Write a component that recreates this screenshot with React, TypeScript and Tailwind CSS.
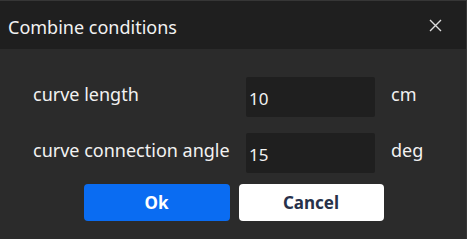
const rows = [
  { label: "curve length", value: "10", unit: "cm" },
  { label: "curve connection angle", value: "15", unit: "deg" },
];

export default function App() {
  return (
    <div
      className="w-[467px] h-[239px] flex flex-col bg-[#2b2b2b] border-t border-r border-[#363636] text-[#f2f2f2] overflow-hidden"
      style={{ fontFamily: '"Noto Sans", "Open Sans", sans-serif' }}
    >
      {/* Title bar */}
      <div className="h-[48px] shrink-0 flex items-center justify-between bg-[#1f1f1f] pl-2 pr-[24px]">
        <span className="text-[18px] leading-none pt-[3px]">Combine conditions</span>
        <svg width="13" height="13" viewBox="0 0 13 13" className="text-[#dcdcdc]">
          <path d="M1 1 L12 12 M12 1 L1 12" stroke="currentColor" strokeWidth="1.4" fill="none" />
        </svg>
      </div>

      {/* Fields */}
      <div className="flex flex-col gap-4 pt-[28px] pl-[33px]">
        {rows.map((r) => (
          <div key={r.label} className="flex items-center h-[40px]">
            <span className="w-[213px] text-[18px] leading-none pb-[6px]">{r.label}</span>
            <div className="w-[129px] h-[40px] bg-[#1f1f1f] rounded-[2px] flex items-center pl-[3px] pt-[3px] text-[17px]">
              {r.value}
            </div>
            <span className="ml-[16px] text-[18px] leading-none pb-[6px]">{r.unit}</span>
          </div>
        ))}
      </div>

      {/* Buttons */}
      <div className="flex justify-center gap-[9px] mt-[11px] pl-[1px]">
        <button className="w-[146px] h-[37px] rounded-[4px] bg-[#0a6cf2] text-white text-[17px] font-bold">
          Ok
        </button>
        <button className="w-[145px] h-[37px] rounded-[4px] bg-white text-[#27314a] text-[17px] font-bold">
          Cancel
        </button>
      </div>
    </div>
  );
}
